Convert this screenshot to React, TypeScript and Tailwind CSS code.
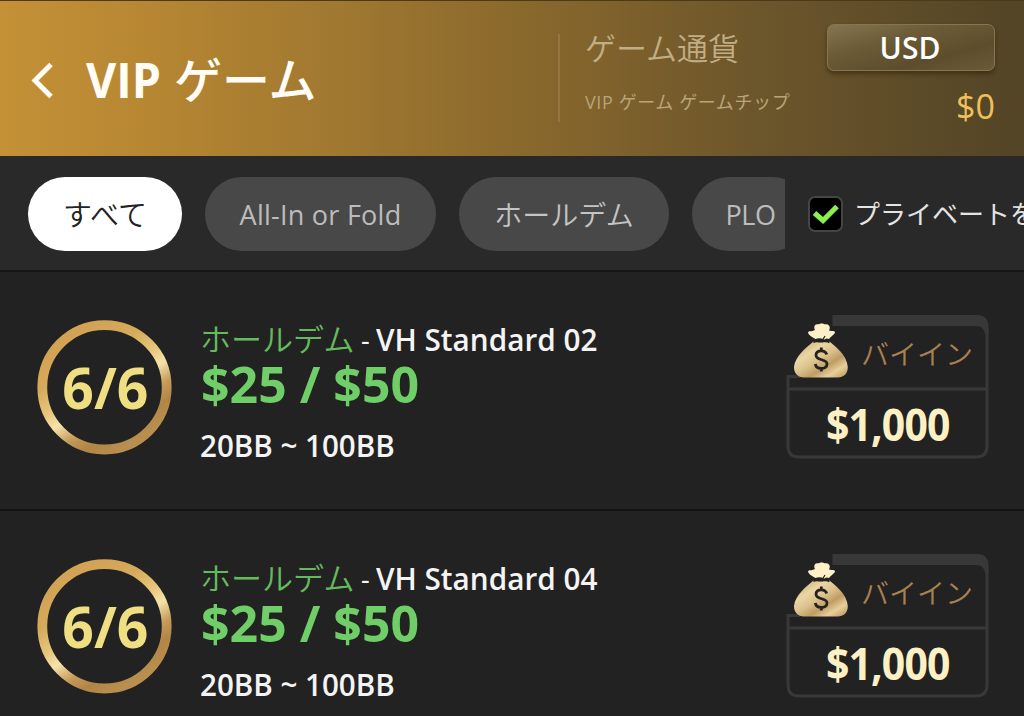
import React from "react";

const rows = [{ name: "VH Standard 02" }, { name: "VH Standard 04" }];

function Ring({ id }: { id: string }) {
  return (
    <svg viewBox="0 0 136 136" className="col-start-1 row-start-1 h-[136px] w-[136px]">
      <defs>
        <linearGradient id={id} x1="0.24" y1="0.075" x2="0.76" y2="0.925">
          <stop offset="0" stopColor="#d2a255" />
          <stop offset="0.25" stopColor="#d6aa5b" />
          <stop offset="0.45" stopColor="#e8c77d" />
          <stop offset="0.57" stopColor="#f6e3aa" />
          <stop offset="0.72" stopColor="#c69c5a" />
          <stop offset="0.85" stopColor="#b08546" />
          <stop offset="1" stopColor="#b98f50" />
        </linearGradient>
      </defs>
      <circle cx="67.500" cy="68.300" r="62.200" fill="none" stroke={`url(#${id})`} strokeWidth="9.800" />
    </svg>
  );
}

function MoneyBag({ id }: { id: string }) {
  return (
    <svg viewBox="0 0 56 56" className="absolute left-[7px] top-[8px] h-14 w-14">
      <defs>
        <linearGradient id={id} x1="0.1" y1="0.1" x2="0.9" y2="0.95">
          <stop offset="0" stopColor="#cdb07a" />
          <stop offset="0.25" stopColor="#ead6a4" />
          <stop offset="0.45" stopColor="#dcc38e" />
          <stop offset="0.66" stopColor="#c19c64" />
          <stop offset="0.85" stopColor="#e6d09c" />
          <stop offset="1" stopColor="#c9a66c" />
        </linearGradient>
      </defs>
      <path
        d="M20.500 18.500 L36.500 18.500 C42 23 54 32 54.800 44 C55 51 50 54.500 45 54.500 L11 54.500 C5 54.500 .8 50 1 44 C2 33 14 24 20.500 18.500Z"
        fill={`url(#${id})`}
      />
      <path
        d="M22.500 16 C19 14 15.500 12 15 9.500 C15.500 7.500 18.500 9 22 7 C20.500 4 21.500 1.500 24 1.200 C26 1.500 26.500 .5 28.500 .5 C31 .5 31.500 1.500 33.500 1.200 C37 1.800 37.500 5 36 7.500 C38.500 8.500 41 7 42 9 C42 11.500 38 13 36 16 C33 14.500 32 16.500 31 16.500 C28 15 25 15 22.500 16Z"
        fill="#fbf0c8"
      />
      <path d="M20.500 19.500 C23 17 25 19.500 27 18.500 C30 19.500 33 17 36.500 19.500" fill="none" stroke="#222" strokeWidth="1.600" />
      <path d="M28.500 19 C29.500 16.500 31 15 32 13" fill="none" stroke="#222" strokeWidth="1.200" />
      <path
        d="M33.700 31.500 C33 29 31 27.800 28.300 27.800 C25 27.800 23 29.500 23 32.200 C23 38 34 35.500 34 41 C34 43.900 31.500 45.500 28.300 45.500 C25 45.500 22.800 44 22.300 41 M28.300 24.500 V28 M28.300 45 V48.500"
        fill="none"
        stroke="#262220"
        strokeWidth="2.800"
      />
    </svg>
  );
}

function BuyIn({ id }: { id: string }) {
  return (
    <div className="relative h-[146px] w-[204px] shrink-0">
      <svg viewBox="0 0 204 146" className="absolute inset-0 h-[146px] w-[204px]">
        <path d="M46.500 0 H191 Q202.500 0 202.500 12 V18 L199 19 Q198 11 190 11 H46.500Z" fill="#383838" />
        <path d="M201 14 V131 Q201 142 190 142 H13 Q2 142 2 131 V61.500 H14" fill="none" stroke="#383838" strokeWidth="3" />
        <path d="M2 74 H201" stroke="#383838" strokeWidth="3" />
      </svg>
      <MoneyBag id={id} />
      <div className="relative flex h-[75px] items-center pl-[75px] pt-[3px]">
        <span className="whitespace-nowrap text-[28px] font-[350] leading-[36px] text-[#a88150]">バイイン</span>
      </div>
      <div className="relative flex h-[67px] items-center justify-center">
        <span className="origin-center scale-x-[0.91] whitespace-nowrap text-[45px] font-bold leading-[60px] tracking-[-1px] text-[#fdf0c4]">$1,000</span>
      </div>
    </div>
  );
}

function Tab({ label, className }: { label: string; className: string }) {
  return (
    <div className={`flex h-[74px] shrink-0 items-center justify-center rounded-full whitespace-nowrap pt-[2px] leading-[40px] ${className}`}>
      {label}
    </div>
  );
}

export default function App() {
  return (
    <div className="flex h-[716px] w-[1024px] flex-col overflow-hidden bg-[#222222] font-['Open_Sans','Noto_Sans_CJK_JP',sans-serif]">
      <header className="flex h-[156px] shrink-0 border-t border-[#4a3a1a] bg-[linear-gradient(90deg,#c49136_0%,#b68632_15%,#a07830_33%,#86662c_54%,#6b552b_75%,#524426_100%)]">
        <div className="flex w-[558px] pl-[31px] pt-[48px]">
          <svg viewBox="0 0 24 38" className="mt-[13px] h-[38px] w-6">
            <path d="M20 2.500 L4 18.500 L20 34.500" fill="none" stroke="#fffdf6" strokeWidth="5" />
          </svg>
          <h1 className="ml-[31px] flex items-baseline whitespace-nowrap leading-[60px] text-[#fffdf6]">
            <span className="inline-block w-[88px] origin-left scale-x-[0.95] text-[49px] font-bold">VIP</span>
            <span className="text-[48px] font-medium">ゲーム</span>
          </h1>
        </div>
        <div className="mt-[33px] h-[88px] w-[2px] bg-[#94763f]" />
        <div className="flex w-[266px] flex-col pl-[25px] pt-[27px] text-[#c0ae84]">
          <div className="whitespace-nowrap text-[31px] leading-[40px] font-[350]">ゲーム通貨</div>
          <div className="mt-[19px] whitespace-nowrap text-[18px] leading-[30px] tracking-[0.6px] text-[#b8a578]">VIP ゲーム ゲームチップ</div>
        </div>
        <div className="flex w-[169px] flex-col items-end pt-[23px]">
          <div className="flex h-[47px] w-[168px] items-center justify-center rounded-[7px] border border-[#85764f] bg-[linear-gradient(165deg,#857550_0%,#6b5b36_35%,#5d4d2c_70%,#6a5a38_100%)] pr-[2px] text-[30px] font-semibold text-white shadow-[0_3px_4px_rgba(40,28,5,0.5)]">
            <span>USD</span>
          </div>
          <div className="mt-[11px] text-[34px] leading-[48px] text-[#eebf5c]">$0</div>
        </div>
      </header>
      <nav className="flex h-[116px] shrink-0 border-b-2 border-[#161616] bg-[#292929] pt-[21px]">
        <div className="flex w-[785px] shrink-0 gap-[23px] overflow-hidden pl-7">
          <Tab label="すべて" className="w-[154px] bg-white text-[29px] font-[350] text-[#222222]" />
          <Tab label="All-In or Fold" className="w-[231px] bg-[#484848] text-[27px] tracking-[0.25px] text-[#bcbcbc]" />
          <Tab label="ホールデム" className="w-[210px] bg-[#484848] text-[28px] font-[350] text-[#c4c4c4]" />
          <Tab label="PLO" className="w-[117px] bg-[#484848] text-[27px] tracking-[-0.5px] text-[#bcbcbc]" />
        </div>
        <div className="ml-[23px] flex h-[74px] items-center">
          <div className="flex h-9 w-[35px] shrink-0 items-center justify-center rounded-[7px] border-2 border-[#454545] bg-black">
            <svg viewBox="0 0 28 24" className="h-6 w-7 shrink-0">
              <path d="M2.500 11 L11 18.500 L25 4.500" fill="none" stroke="#8cf04c" strokeWidth="5.200" />
            </svg>
          </div>
          <span className="ml-[11px] whitespace-nowrap text-[26px] leading-[40px] text-[#e4e4e4]">プライベートを</span>
        </div>
      </nav>
      <main>
        {rows.map((row, i) => (
          <section key={row.name} className="flex h-[239px] border-b-2 border-[#141414] pt-[43px]">
            <div className="ml-[37px] mt-[4px] grid h-[136px] w-[136px] shrink-0 place-items-center">
              <Ring id={`ring-${i}`} />
              <span className="col-start-1 row-start-1 scale-x-[0.97] text-[57px] font-bold leading-[60px] text-[#f0df82]">6/6</span>
            </div>
            <div className="flex w-[613px] flex-col pl-[27px]">
              <div className="flex items-baseline whitespace-nowrap pt-[4px] text-[30px] leading-[40px] text-[#f4f4f4]">
                <span className="w-[161px] text-[31px] font-[350] text-[#64bb5d]">ホールデム</span>
                <span className="w-[15px] origin-left scale-x-[0.9]">-</span>
                <span className="origin-left scale-x-[0.99] font-semibold">{row.name}</span>
              </div>
              <div className="-mt-[2px] ml-px origin-left scale-x-[0.98] whitespace-nowrap text-[51px] font-bold leading-[50px] text-[#6fce67]">$25 / $50</div>
              <div className="mt-[18px] origin-left scale-x-[0.985] whitespace-nowrap text-[30px] font-semibold leading-[40px] text-[#f4f4f4]">20BB ~ 100BB</div>
            </div>
            <BuyIn id={`bag-${i}`} />
          </section>
        ))}
      </main>
    </div>
  );
}
